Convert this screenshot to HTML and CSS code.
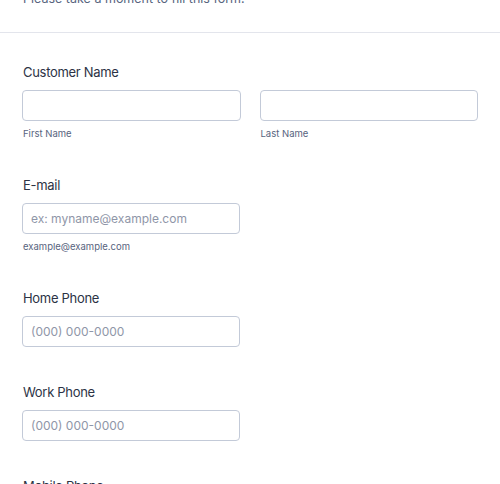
FILE: index.html
```html
<!DOCTYPE html>
<html>
<head>
<meta charset="utf-8">
<link rel="stylesheet" href="styles.css">
</head>
<body>
<div class="header">
  <p class="subheader">Please take a moment to fill this form.</p>
</div>
<div class="form">
  <div class="field">
    <label class="label">Customer Name</label>
    <div class="row">
      <div class="col">
        <input class="input" type="text">
        <span class="sublabel">First Name</span>
      </div>
      <div class="col">
        <input class="input" type="text">
        <span class="sublabel">Last Name</span>
      </div>
    </div>
  </div>
  <div class="field">
    <label class="label">E-mail</label>
    <div class="col half">
      <input class="input" type="text" placeholder="ex: myname@example.com">
      <span class="sublabel">example@example.com</span>
    </div>
  </div>
  <div class="field">
    <label class="label">Home Phone</label>
    <div class="col half">
      <input class="input" type="text" placeholder="(000) 000-0000">
    </div>
  </div>
  <div class="field">
    <label class="label">Work Phone</label>
    <div class="col half">
      <input class="input" type="text" placeholder="(000) 000-0000">
    </div>
  </div>
  <div class="field">
    <label class="label">Mobile Phone</label>
    <div class="col half">
      <input class="input" type="text" placeholder="(000) 000-0000">
    </div>
  </div>
</div>
</body>
</html>
```

FILE: styles.css
```css
html, body {
  margin: 0;
  padding: 0;
  background: #fff;
  font-family: Inter, "Noto Sans", sans-serif;
  overflow: hidden;
}
.header {
  display: flow-root;
  border-bottom: 1px solid #e3e5ec;
  padding: 0 23px;
  height: 32px;
}
.subheader {
  margin: -11px 0 0;
  font-size: 12.5px;
  line-height: 20px;
  color: #57647e;
}
.form {
  padding: 29px 22px 0;
  display: flex;
  flex-direction: column;
  gap: 35px;
}
.field {
  display: flex;
  flex-direction: column;
}
.label {
  font-size: 13px;
  line-height: 20px;
  font-weight: 400;
  letter-spacing: -0.3px;
  color: #2c3345;
  padding-left: 1px;
  margin-bottom: 8px;
}
.row {
  display: flex;
  gap: 19px;
}
.col {
  display: flex;
  flex-direction: column;
  flex: 1;
}
.half {
  width: 218px;
  flex: none;
}
.input {
  box-sizing: border-box;
  height: 31px;
  width: 100%;
  border: 1px solid #c3cad8;
  border-radius: 4px;
  padding: 0 8px;
  font-family: Inter, "Noto Sans", sans-serif;
  font-size: 12px;
  color: #2c3345;
  background: #fff;
  outline: none;
}
.input::placeholder {
  color: #8f96a8;
}
.sublabel {
  margin-top: 7px;
  font-size: 9.5px;
  line-height: 12px;
  color: #57647e;
  padding-left: 1px;
}
```
